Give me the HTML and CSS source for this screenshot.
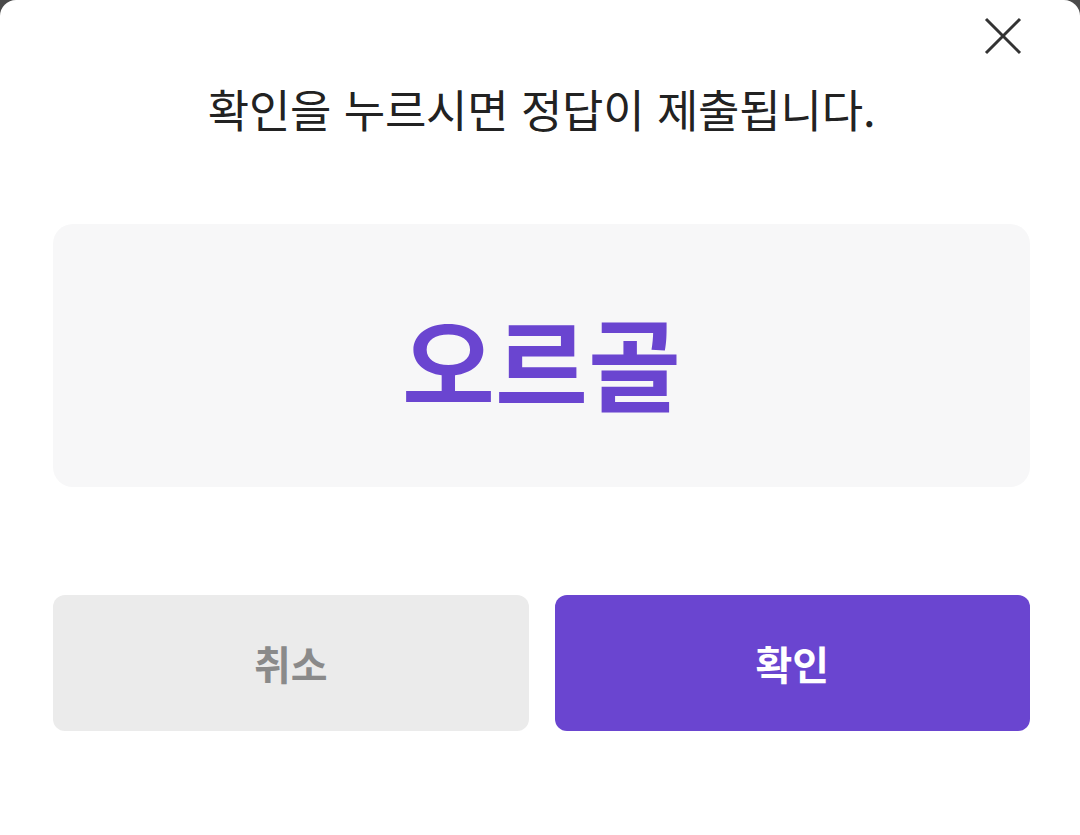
FILE: index.html
```html
<!DOCTYPE html>
<html lang="ko">
<head>
  <meta charset="UTF-8" />
  <meta name="viewport" content="width=device-width, initial-scale=1.0"/>
  <title>정답 제출</title>
  <link rel="stylesheet" href="styles.css">
</head>
<body>

  <div class="sheet">
    <div class="top">
      <button class="close" aria-label="닫기">
        <svg width="38" height="38" viewBox="0 0 38 38">
          <path d="M2 2 L36 36 M36 2 L2 36" stroke="#333" stroke-width="3" fill="none"/>
        </svg>
      </button>
    </div>

    <p class="message">확인을 누르시면 정답이 제출됩니다.</p>

    <div class="answer">오르골</div>

    <div class="actions">
      <button class="btn cancel">취소</button>
      <button class="btn ok">확인</button>
    </div>
  </div>

</body>
</html>
```

FILE: styles.css
```css
html, body { margin: 0; height: 100%; }
body {
  background-color: #4a4a4a;
  font-family: "Noto Sans CJK KR", "Noto Sans", sans-serif;
}
.sheet {
  background-color: #fff; height: 100%; box-sizing: border-box;
  border-radius: 16px 16px 0 0;
  padding: 0 50px 0 53px;
}
.top {
  display: flex; justify-content: flex-end;
  padding-top: 17px; margin-right: 8px;
}
.close {
  border: none; background: none; padding: 0; cursor: pointer;
  width: 38px; height: 38px;
}
.close svg { display: block; }
.message {
  margin: 24px 0 0; text-align: center;
  font-size: 45px; line-height: 60px; color: #222;
  letter-spacing: -0.2px;
}
.answer {
  margin-top: 85px; height: 263px; border-radius: 20px;
  background-color: #f7f7f8;
  display: flex; justify-content: center; align-items: center;
  font-size: 101px; font-weight: 700; color: #6a45d0;
  padding-top: 8px; box-sizing: border-box;
}
.actions {
  display: flex; gap: 26px; margin-top: 108px;
}
.btn {
  flex: 1; height: 136px; border: none; border-radius: 12px;
  font-family: inherit; font-size: 40px; font-weight: 700; cursor: pointer;
}
.cancel { background-color: #ebebeb; color: #8a8a8a; }
.ok { background-color: #6a45d0; color: #fff; }
```
